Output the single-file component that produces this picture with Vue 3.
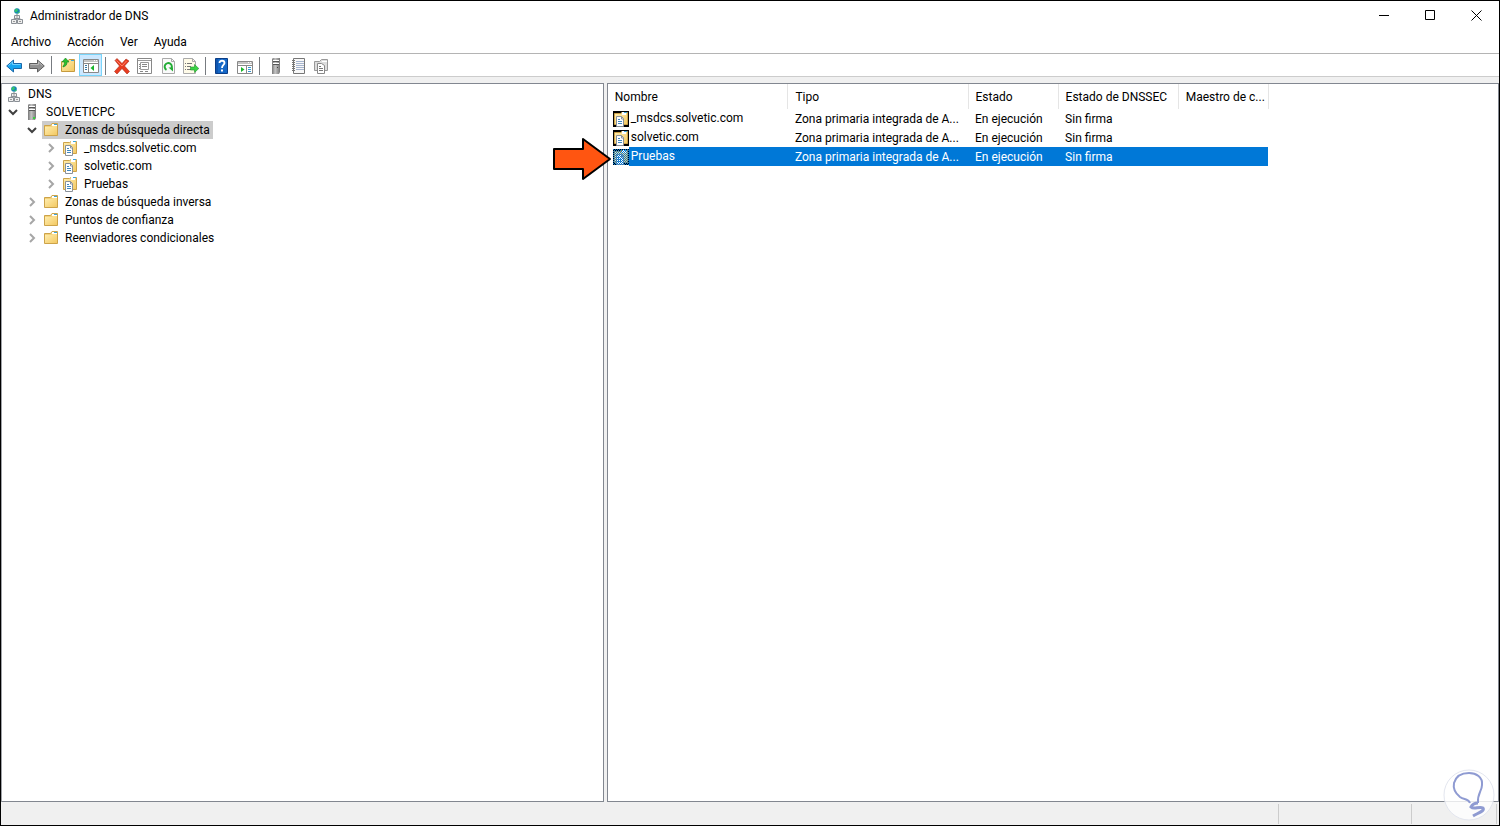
<template>
  <div class="window">
    <svg class="sprite" aria-hidden="true">
      <defs>
        <linearGradient id="gold" x1="0" y1="0" x2="1" y2="1">
          <stop offset="0" stop-color="#ffeeb0" />
          <stop offset="1" stop-color="#f3c963" />
        </linearGradient>
        <linearGradient id="steel" x1="0" y1="0" x2="1" y2="0">
          <stop offset="0" stop-color="#777" />
          <stop offset="0.4" stop-color="#c4c4c4" />
          <stop offset="1" stop-color="#777" />
        </linearGradient>
        <pattern id="dither" width="2" height="2" patternUnits="userSpaceOnUse">
          <path d="M0 0h1v1h-1zM1 1h1v1h-1z" fill="#0078d7" />
        </pattern>
      </defs>
      <symbol id="dns" viewBox="0 0 16 16">
        <circle cx="8" cy="3" r="2.8" fill="#1685b5" />
        <path d="M6 1.500l2-1 1 2-2 2-1.500-1zM9 4h1.500v1l-2 .5z" fill="#35c46a" />
        <path d="M8 6v2M5 12v-1.500h6v1.500" fill="none" stroke="#888" />
        <path d="M5.500 7.500h5v3h-5zM2.500 11.500h5v4h-5zM8.500 11.500h5v4h-5z" fill="#eee" stroke="#8b9096" />
        <path d="M7 9h2M4 13.500h2M10 13.500h2" stroke="#999" />
      </symbol>
      <symbol id="server" viewBox="0 0 16 16">
        <path d="M4 1l1-1h7v14l-1 2h-7z" fill="url(#steel)" />
        <path d="M5 2.500h6M5 5.500h6" stroke="#fff" />
        <path d="M5 3.500h6M5 6.500h6" stroke="#555" />
        <path d="M9 13h2v2h-2z" fill="#36d13c" />
      </symbol>
      <symbol id="server-gray" viewBox="0 0 16 16">
        <path d="M4 1l1-1h7v14l-1 2h-7z" fill="url(#steel)" />
        <path d="M5 2.500h6M5 5.500h6" stroke="#fff" />
        <path d="M5 3.500h6M5 6.500h6" stroke="#555" />
        <path d="M9 9h1v1h-1z" fill="#444" />
      </symbol>
      <symbol id="folder" viewBox="0 0 16 16">
        <path d="M1.500 13.500v-10h6l1.500-2h5.500v12z" fill="#f4d27a" stroke="#cda349" />
        <path d="M9 2h5v2h-5z" fill="#fff" />
        <path d="M11 2h3v1h-3z" fill="#3da5d8" />
        <path d="M2 5h7l1-1h4v9h-12z" fill="url(#gold)" />
      </symbol>
      <symbol id="zone" viewBox="0 0 16 16">
        <path d="M1.500 13.500v-11h6l1.500-1h5.500v12z" fill="url(#gold)" stroke="#cda349" />
        <path d="M9 1h4v3h-4z" fill="#fff" />
        <path d="M11 1h3v1h-3z" fill="#3da5d8" />
        <path d="M3.500 5.500h5l2 2v8h-7z" fill="#fff" stroke="#8a9199" />
        <path d="M8.500 5.500v2.500h2" fill="none" stroke="#8a9199" />
        <path d="M5 8.500h2M5 10.500h4M5 12.500h4" stroke="#3f87bf" />
      </symbol>
      <symbol id="back" viewBox="0 0 16 16">
        <path d="M.7 8l6.800-6v3.500h8v5h-8v3.500z" fill="#18a5f0" stroke="#1b67a8" />
        <path d="M2.500 7.500l4-3.500v2.500h8" fill="none" stroke="#70d1ff" />
      </symbol>
      <symbol id="forward" viewBox="0 0 16 16">
        <path d="M15.300 8l-6.800-6v3.500h-8v5h8v3.500z" fill="#929292" stroke="#5e5e5e" />
        <path d="M1.500 6.500h8v-2.500l4 3.500" fill="none" stroke="#bbb" />
      </symbol>
      <symbol id="up" viewBox="0 0 16 16">
        <path d="M1.500 14.500v-10h6l1.500-2h5.500v12z" fill="url(#gold)" stroke="#c69a3d" />
        <path d="M11 3h3v1h-3z" fill="#3da5d8" />
        <path d="M3 10c3-1 4-2 4-5h2l-3.500-4-3.500 4h2.500c0 2-.5 3-1.500 4z" fill="#2bbf2f" stroke="#16821c" stroke-width=".6" />
      </symbol>
      <symbol id="tree-pane" viewBox="0 0 16 16">
        <path d="M.5 2.500h15v13h-15z" fill="#fff" stroke="#888" />
        <path d="M1 4h14M1 6.500h14" stroke="#888" />
        <path d="M11 3.500h1M13 3.500h1" stroke="#fff" />
        <path d="M5.500 7v8" stroke="#888" />
        <path d="M2 8.500h2M2 10.500h2M2 12.500h2" stroke="#3478a8" />
        <path d="M11 8v6l-3.500-3z" fill="#17b52b" />
      </symbol>
      <symbol id="action-pane" viewBox="0 0 16 16">
        <path d="M.5 3.500h15v12h-15z" fill="#fff" stroke="#888" />
        <path d="M1 5h14M1 7.500h14" stroke="#888" />
        <path d="M11 4.500h1M13 4.500h1" stroke="#fff" />
        <path d="M9.500 8v7" stroke="#888" />
        <path d="M11 9.500h3M11 11.500h3M11 13.500h3" stroke="#3497cf" />
        <path d="M4 9v5l3.500-2.500z" fill="#17b52b" />
      </symbol>
      <symbol id="delete" viewBox="0 0 16 16">
        <path d="M1 2.500l2-2 5 5 4-4.500 3 2-4.500 5 5 5.500-2.500 2.500-5-5.500-5 5.500-2.500-2.500 5-5.500z" fill="#e83c20" stroke="#a92c1a" stroke-width=".6" />
        <path d="M2.500 2.500l5.500 5.500 4.500-5" fill="none" stroke="#ff8065" />
      </symbol>
      <symbol id="properties" viewBox="0 0 16 16">
        <path d="M.5.500h14v15h-14z" fill="#fff" stroke="#888" />
        <path d="M1 2.500h13M3.500 4.500h8v7h-8z" fill="none" stroke="#999" />
        <path d="M2 6.500h1M5 6.500h5M2 8.500h1M5 8.500h5M2 10.500h1M3 13.500h3M8 13.500h3" stroke="#888" />
      </symbol>
      <symbol id="refresh" viewBox="0 0 16 16">
        <path d="M2.500.5h9l3 3v12h-12z" fill="#fafafa" stroke="#aaa" />
        <path d="M11.500.5v3h3" fill="none" stroke="#aaa" />
        <path d="M6.500 11.800a3.600 3.600 0 1 1 4.500-.8" fill="none" stroke="#24ad37" stroke-width="2" />
        <path d="M8.500 9.500h4.500v4z" fill="#24ad37" />
      </symbol>
      <symbol id="export" viewBox="0 0 16 16">
        <path d="M.5.500h9l3 3v12h-12z" fill="#fffbe8" stroke="#aaa" />
        <path d="M9.500.5v3h3" fill="none" stroke="#aaa" />
        <path d="M2 5.500h1M4 5.500h5M2 8.500h1M4 8.500h4M2 11.500h1M4 11.500h4" stroke="#777" />
        <path d="M7.500 9h4v-2.500l4.300 4-4.300 4v-2.500h-4z" fill="#3bd344" stroke="#20962a" stroke-width=".6" />
      </symbol>
      <symbol id="help" viewBox="0 0 16 16">
        <path d="M1.500.5h12v15h-12z" fill="#1467c7" stroke="#0b3d86" />
        <path d="M3 1v14" stroke="#0a4698" />
        <path d="M5.500 5c0-3 5-3 5 0 0 2-2.500 2-2.500 5" fill="none" stroke="#fff" stroke-width="1.800" />
        <path d="M7 11.500h2v2h-2z" fill="#fff" />
      </symbol>
      <symbol id="notebook" viewBox="0 0 16 16">
        <path d="M2.500.5h11v15h-11z" fill="#f8f8f8" stroke="#777" />
        <path d="M5 3.500h8M5 5.500h8M5 7.500h8M5 9.500h8M5 11.500h8" stroke="#a6b5cf" />
        <path d="M1 2.500h3M1 4.500h3M1 6.500h3M1 8.500h3M1 10.500h3M1 12.500h3" stroke="#777" />
      </symbol>
      <symbol id="zone-gray" viewBox="0 0 16 16">
        <path d="M.5 12.500v-9h5l2-2h6v11z" fill="#ddd" stroke="#999" />
        <path d="M8 3.500h5" stroke="#fff" />
        <path d="M3.500 5.500h4l3 2v8h-7z" fill="#fff" stroke="#888" />
        <path d="M5 8.500h2M5 10.500h4M5 12.500h4" stroke="#777" />
      </symbol>
    </svg>

    <header class="title-bar">
      <svg class="icon"><use href="#dns" /></svg>
      <h1>Administrador de DNS</h1>
      <div class="window-buttons">
        <button type="button" aria-label="Minimizar">
          <svg viewBox="0 0 11 11"><path d="M0 5.500h10" /></svg>
        </button>
        <button type="button" aria-label="Maximizar">
          <svg viewBox="0 0 11 11"><path d="M.5.500h9v9h-9z" /></svg>
        </button>
        <button type="button" aria-label="Cerrar">
          <svg viewBox="0 0 11 11"><path d="M.5.500l10 10M10.500.5l-10 10" /></svg>
        </button>
      </div>
    </header>

    <nav class="menu">
      <button v-for="item in menu" :key="item" type="button">{{ item }}</button>
    </nav>

    <div class="toolbar">
      <div v-for="(group, i) in tools" :key="i" class="tool-group">
        <button
          v-for="tool in group"
          :key="tool.icon"
          type="button"
          :class="{ active: tool.active }"
          :aria-label="tool.label"
        >
          <svg class="icon"><use :href="'#' + tool.icon" /></svg>
        </button>
      </div>
    </div>

    <main class="panes">
      <section class="pane tree-pane">
        <ul class="tree">
          <li v-for="node in tree" :key="node.id" :class="'depth-' + node.depth">
            <button
              v-if="node.depth"
              type="button"
              class="toggle"
              :class="{ open: node.open }"
              :aria-label="node.label"
              :aria-expanded="node.open"
            >
              <svg viewBox="0 0 10 10"><path d="M3 1l4 4-4 4" /></svg>
            </button>
            <button
              type="button"
              class="node"
              :class="{ selected: selected === node.id }"
              @click="selected = node.id"
            >
              <svg class="icon"><use :href="'#' + node.icon" /></svg>
              <span>{{ node.label }}</span>
            </button>
          </li>
        </ul>
      </section>

      <section class="pane list-pane">
        <table>
          <colgroup>
            <col class="wide">
            <col class="wide">
            <col class="narrow">
            <col class="medium">
            <col class="narrow">
          </colgroup>
          <thead>
            <tr>
              <th v-for="column in columns" :key="column">{{ column }}</th>
            </tr>
          </thead>
          <tbody>
            <tr v-for="zone in zones" :key="zone.name" :class="{ current: zone.current }">
              <td class="name">
                <div>
                  <svg class="icon" viewBox="0 0 16 16">
                    <use href="#zone" />
                    <rect v-if="zone.current" width="16" height="16" fill="url(#dither)" />
                  </svg>
                  <span>{{ zone.name }}</span>
                </div>
              </td>
              <td>Zona primaria integrada de A...</td>
              <td>En ejecución</td>
              <td>Sin firma</td>
              <td></td>
            </tr>
          </tbody>
        </table>
        <svg class="pointer" viewBox="0 0 60 44" aria-hidden="true">
          <path d="M2 12h29v-10l27 20-27 20v-10h-29z" />
        </svg>
      </section>
    </main>

    <footer class="status-bar">
      <span></span>
      <span></span>
      <span></span>
    </footer>

    <svg class="watermark" viewBox="0 0 52 52" aria-hidden="true">
      <circle cx="26" cy="26" r="25" />
      <path d="M27 34c-2-5-6-3-10-6-5-4-7-9-6-14 2-7 8-10 15-10s14 4 13 12c0 6-5 9-4 18" />
      <path class="base" d="M35 34c-4 0-6 2-7 4 3 3 8-1 12 1 2 3-5 5-10 8" />
    </svg>
  </div>
</template>

<script setup>
import { ref } from 'vue';

const menu = ['Archivo', 'Acción', 'Ver', 'Ayuda'];

const tools = [
  [
    { icon: 'back', label: 'Atrás' },
    { icon: 'forward', label: 'Adelante' },
  ],
  [
    { icon: 'up', label: 'Subir un nivel' },
    { icon: 'tree-pane', label: 'Árbol de consola', active: true },
  ],
  [
    { icon: 'delete', label: 'Eliminar' },
    { icon: 'properties', label: 'Propiedades' },
    { icon: 'refresh', label: 'Actualizar' },
    { icon: 'export', label: 'Exportar lista' },
  ],
  [
    { icon: 'help', label: 'Ayuda' },
    { icon: 'action-pane', label: 'Panel de acciones' },
  ],
  [
    { icon: 'server-gray', label: 'Nuevo servidor' },
    { icon: 'notebook', label: 'Nuevo registro' },
    { icon: 'zone-gray', label: 'Nueva zona' },
  ],
];

const tree = [
  { id: 1, depth: 0, icon: 'dns', label: 'DNS' },
  { id: 2, depth: 1, icon: 'server', label: 'SOLVETICPC', open: true },
  { id: 3, depth: 2, icon: 'folder', label: 'Zonas de búsqueda directa', open: true },
  { id: 4, depth: 3, icon: 'zone', label: '_msdcs.solvetic.com', open: false },
  { id: 5, depth: 3, icon: 'zone', label: 'solvetic.com', open: false },
  { id: 6, depth: 3, icon: 'zone', label: 'Pruebas', open: false },
  { id: 7, depth: 2, icon: 'folder', label: 'Zonas de búsqueda inversa', open: false },
  { id: 8, depth: 2, icon: 'folder', label: 'Puntos de confianza', open: false },
  { id: 9, depth: 2, icon: 'folder', label: 'Reenviadores condicionales', open: false },
];

const selected = ref(3);

const columns = ['Nombre', 'Tipo', 'Estado', 'Estado de DNSSEC', 'Maestro de c...'];

const zones = [
  { name: '_msdcs.solvetic.com' },
  { name: 'solvetic.com' },
  { name: 'Pruebas', current: true },
];
</script>

<style>
body {
  margin: 0;
}
</style>

<style scoped>
.window {
  position: relative;
  display: flex;
  flex-direction: column;
  box-sizing: border-box;
  min-height: 100vh;
  border: 1px solid #000;
  background: #fff;
  color: #000;
  font-family: "Segoe UI", Roboto, sans-serif;
  font-size: 12px;
  line-height: 18px;
}

.sprite {
  position: absolute;
  width: 0;
  height: 0;
}

button {
  padding: 0;
  border: 0;
  background: none;
  color: inherit;
  font: inherit;
}

.icon {
  display: block;
  flex: none;
  width: 16px;
  height: 16px;
}

.title-bar {
  display: flex;
  align-items: center;
  height: 29px;
  padding-left: 8px;
}

.title-bar h1 {
  margin: 0 0 0 5px;
  font-size: 12px;
  font-weight: normal;
}

.window-buttons {
  display: flex;
  margin-left: auto;
}

.window-buttons button {
  display: flex;
  align-items: center;
  justify-content: center;
  width: 46px;
  height: 29px;
}

.window-buttons svg {
  width: 11px;
  height: 11px;
  fill: none;
  stroke: #000;
}

.menu {
  display: flex;
  align-items: center;
  gap: 16px;
  height: 23px;
  padding: 0 10px;
  border-bottom: 1px solid #b4b4b4;
}

.toolbar {
  display: flex;
  align-items: flex-end;
  height: 22px;
  padding-left: 1px;
  border-bottom: 1px solid #ccc;
}

.tool-group {
  display: flex;
  align-items: center;
}

.tool-group + .tool-group::before {
  content: "";
  width: 1px;
  height: 18px;
  margin: 0 4px 0 3px;
  background: #777b80;
}

.tool-group button {
  display: flex;
  align-items: center;
  justify-content: center;
  width: 23px;
  height: 20px;
}

.tool-group .active {
  box-sizing: border-box;
  height: 22px;
  border: 1px solid #7ad5fa;
  background: #cce8ff;
}

.panes {
  display: flex;
  flex: 1;
  gap: 3px;
  padding-top: 6px;
  background: #f0f0f0;
}

.pane {
  box-sizing: border-box;
  border: 1px solid #828790;
  background: #fff;
}

.tree-pane {
  flex: 602;
  border-left-color: #a0a3a8;
}

.list-pane {
  position: relative;
  flex: 892;
}

.tree {
  margin: 0;
  padding: 1px 0 0 3px;
  list-style: none;
}

.tree li {
  display: flex;
  align-items: center;
  height: 18px;
}

.depth-2 {
  padding-left: 19px;
}

.depth-3 {
  padding-left: 38px;
}

.toggle {
  display: flex;
  align-items: center;
  justify-content: center;
  width: 16px;
  height: 18px;
  margin-right: 2px;
}

.toggle svg {
  width: 10px;
  height: 10px;
  fill: none;
  stroke: #a6a6a6;
  stroke-width: 2;
}

.toggle.open svg {
  stroke: #404040;
  transform: rotate(90deg);
}

.node {
  display: flex;
  align-items: center;
  gap: 6px;
  height: 18px;
  padding: 0 3px 0 1px;
}

.node.selected {
  background: #ccc;
}

table {
  width: 661px;
  border-collapse: collapse;
  table-layout: fixed;
}

.wide {
  width: 180px;
}

.medium {
  width: 120px;
}

.narrow {
  width: 90px;
}

th {
  box-sizing: border-box;
  height: 25px;
  padding: 0 0 0 7px;
  border-right: 1px solid #e5e5e5;
  font-weight: normal;
  text-align: left;
  white-space: nowrap;
}

td {
  height: 19px;
  padding: 0 0 0 7px;
  overflow: hidden;
  white-space: nowrap;
}

.name {
  padding-left: 5px;
}

.name div {
  display: flex;
  align-items: center;
}

.name .icon {
  background: #000;
}

.name span {
  flex: 1;
  padding-left: 2px;
  line-height: 19px;
}

.current {
  color: #fff;
}

.current td:not(.name),
.current .name span {
  background: #0078d7;
}

.pointer {
  position: absolute;
  top: 53px;
  left: -56px;
  width: 60px;
  height: 44px;
  fill: #ff5511;
  stroke: #000;
  stroke-width: 2;
  stroke-linejoin: round;
}

.status-bar {
  display: flex;
  justify-content: flex-end;
  height: 21px;
  padding: 2px 2px 0 0;
  background: #f0f0f0;
}

.status-bar span {
  height: 20px;
  border-right: 1px solid #ccc;
}

.status-bar span:nth-child(2) {
  width: 132px;
}

.status-bar span:nth-child(3) {
  width: 84px;
}

.watermark {
  position: absolute;
  right: 4px;
  bottom: 4px;
  width: 52px;
  height: 52px;
  fill: none;
  stroke: #8f9bd2;
  stroke-width: 2;
}

.watermark circle {
  fill: #fff;
  fill-opacity: 0.8;
  stroke: #e3e6ef;
  stroke-width: 1;
}

.watermark .base {
  stroke-width: 3;
}
</style>
